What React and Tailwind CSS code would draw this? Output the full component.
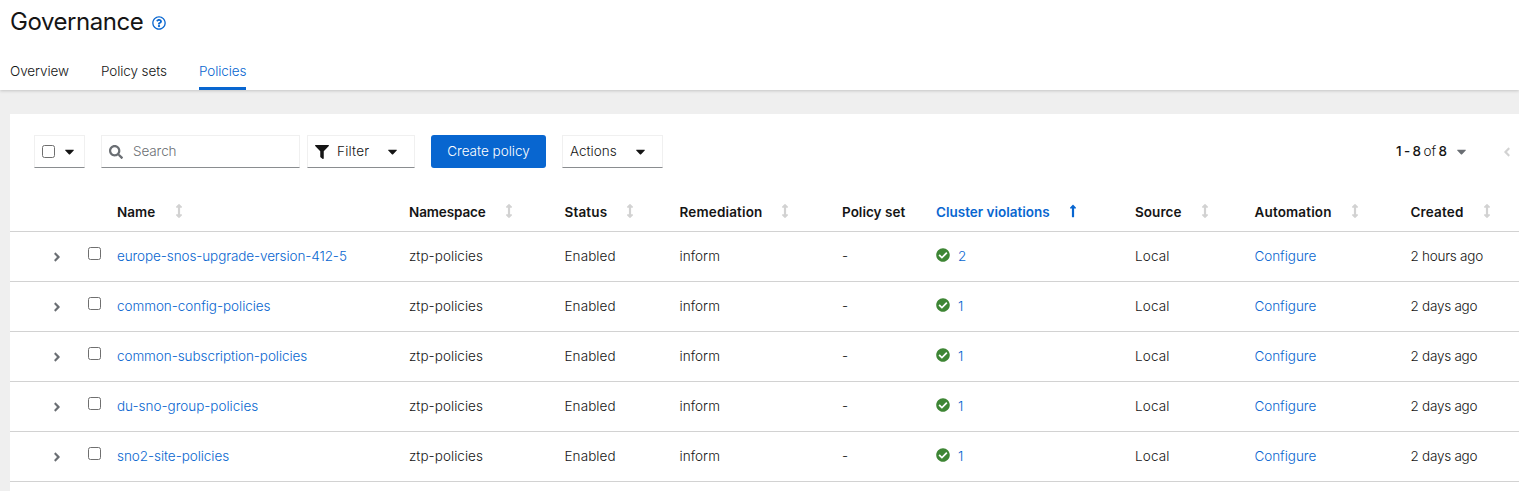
import React from "react";
import {
  FaSearch,
  FaFilter,
  FaCaretDown,
  FaAngleRight,
  FaAngleLeft,
  FaCheckCircle,
  FaLongArrowAltUp,
  FaArrowsAltV,
  FaRegQuestionCircle,
} from "react-icons/fa";

const GRID =
  "grid grid-cols-[46px_61px_292px_155.5px_115px_162.5px_94px_199px_119.5px_156px_108px]";

const HEADERS = [
  { label: "Name", width: "w-[55px]", track: "tracking-[0.05px]" },
  { label: "Namespace", width: "w-[93px]", track: "tracking-[-0.12px]" },
  { label: "Status", width: "w-[58.5px]", track: "tracking-[0.15px]" },
  { label: "Remediation", width: "w-[98.5px]", track: "tracking-[0.16px]" },
  { label: "Policy set", width: "w-[80px]", track: "tracking-[0.02px]", fixed: true },
  { label: "Cluster violations", width: "w-[130px]", track: "tracking-[0px]", active: true },
  { label: "Source", width: "w-[63px]", track: "tracking-[0.05px]" },
  { label: "Automation", width: "w-[93.5px]", track: "tracking-[0.15px]" },
  { label: "Created", width: "w-[69.5px]", track: "tracking-[0.15px]" },
];

const ROWS = [
  { name: "europe-snos-upgrade-version-412-5", track: "tracking-[-0.1px]", count: 2, created: "2 hours ago" },
  { name: "common-config-policies", track: "tracking-[-0.05px]", count: 1, created: "2 days ago" },
  { name: "common-subscription-policies", track: "tracking-[-0.07px]", count: 1, created: "2 days ago" },
  { name: "du-sno-group-policies", track: "tracking-[-0.02px]", count: 1, created: "2 days ago" },
  { name: "sno2-site-policies", track: "tracking-[-0.06px]", count: 1, created: "2 days ago" },
];

function Checkbox() {
  return (
    <input
      type="checkbox"
      className="block size-[13px] shrink-0 appearance-none rounded-[2.5px] border border-[#6f6f6f] bg-white"
    />
  );
}

const control =
  "flex h-[33px] shrink-0 items-center border border-[#f0f0f0] border-b-[#8a8d90] bg-white";

export default function App() {
  return (
    <div className="flex h-[491px] w-[1519px] flex-col overflow-hidden bg-[#efefef] font-['Inter',sans-serif] text-[13.5px] leading-[21px] font-[350] tracking-[-0.1px] text-[#151515]">
      <header className="relative z-10 flex h-[90px] shrink-0 flex-col bg-white pl-[10px] shadow-[0_1px_3px_rgba(3,3,3,0.18)]">
        <div className="flex h-[43px] items-center">
          <h1 className="w-[142px] whitespace-nowrap text-[24px] leading-[31px] font-normal tracking-[-0.45px]">Governance</h1>
          <FaRegQuestionCircle className="mt-[3px] size-[14px] stroke-0 text-[#0866d0]" />
        </div>
        <nav className="mt-[13px] flex h-[34px] whitespace-nowrap">
          <a className="w-[91px] pt-[5px]">Overview</a>
          <a className="w-[98px] pt-[5px]">Policy sets</a>
          <a className="w-[47px] border-b-3 border-[#0866d0] pt-[5px] text-[#0866d0]">Policies</a>
        </nav>
      </header>

      <main className="mt-6 ml-[10px] flex-1 bg-white">
        <div className="flex h-[75px] items-start pt-[21px] pl-6">
          <button className={`${control} w-[51px] pl-[7px]`}>
            <Checkbox />
            <FaCaretDown className="ml-[7px] size-[15px]" />
          </button>
          <div className={`${control} ml-4 w-[199px] pl-[7px]`}>
            <FaSearch className="size-[14px] text-[#6a6e73]" />
            <span className="-mt-px ml-[10px] text-[#6a6e73]">Search</span>
          </div>
          <button className={`${control} ml-[7px] w-[108px] pl-[7px]`}>
            <FaFilter className="size-[14px]" />
            <span className="-mt-px ml-2 w-[47.5px] text-left tracking-[0.2px]">Filter</span>
            <FaCaretDown className="size-[15px]" />
          </button>
          <button className="ml-4 flex h-[33px] w-[115px] items-center justify-center rounded-[3px] bg-[#0866d0] pb-px tracking-[0px] whitespace-nowrap text-white">
            Create policy
          </button>
          <button className={`${control} ml-4 w-[101px] pl-[7px]`}>
            <span className="-mt-px w-[62.5px] text-left tracking-[0px]">Actions</span>
            <FaCaretDown className="size-[15px]" />
          </button>
          <div className="ml-[733px] flex h-[33px] items-center whitespace-nowrap">
            <span className="-mt-px w-[58px] [word-spacing:-0.9px] tracking-[-0.18px]">
              <b className="font-medium">1 - 8</b> of <b className="font-medium">8</b>
            </span>
            <FaCaretDown className="size-[15px] text-[#6a6e73]" />
            <FaAngleLeft className="ml-[31px] size-[14px] text-[#d2d2d2]" />
          </div>
        </div>

        <div className={`${GRID} h-[43px] border-b border-[#d2d2d2]`}>
          <span />
          <span />
          {HEADERS.map((h) => (
            <div
              key={h.label}
              className={`flex h-[42px] pt-[13px] font-semibold whitespace-nowrap ${h.active ? "text-[#0866d0]" : ""}`}
            >
              <span className={`${h.width} ${h.track}`}>{h.label}</span>
              {h.active ? (
                <FaLongArrowAltUp className="mt-[2px] size-[14px]" />
              ) : h.fixed ? null : (
                <FaArrowsAltV className="mt-[2px] size-[14px] text-[#d2d2d2]" />
              )}
            </div>
          ))}
        </div>

        {ROWS.map((r) => (
          <div key={r.name} className={`${GRID} h-[50px] items-center border-b border-[#d2d2d2] pb-px whitespace-nowrap`}>
            <FaAngleRight className="mt-px ml-[39.5px] size-[14px] text-[#6a6e73]" />
            <div className="-mt-[5px] pl-8">
              <Checkbox />
            </div>
            <a className={`text-[#0866d0] ${r.track}`}>{r.name}</a>
            <span className="tracking-[0.04px]">ztp-policies</span>
            <span className="tracking-[0.08px]">Enabled</span>
            <span className="tracking-[0.05px]">inform</span>
            <span>-</span>
            <span className="flex items-center">
              <FaCheckCircle className="-mt-[2px] size-[14px] text-[#3e8635]" />
              <a className="ml-2 text-[#0866d0]">{r.count}</a>
            </span>
            <span className="tracking-[0.15px]">Local</span>
            <a className="tracking-[-0.05px] text-[#0866d0]">Configure</a>
            <span className="tracking-[-0.25px]">{r.created}</span>
          </div>
        ))}
      </main>
    </div>
  );
}
